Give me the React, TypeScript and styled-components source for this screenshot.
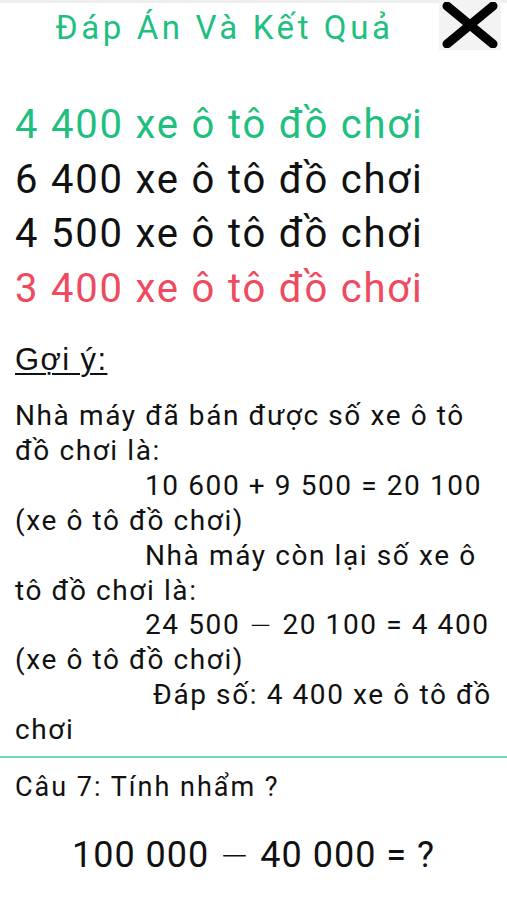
import React from "react";
import styled, { createGlobalStyle } from "styled-components";

const Global = createGlobalStyle`
  html, body { margin: 0; padding: 0; background: #fff; }
  body { font-family: Roboto, "Noto Sans", sans-serif; color: #111; }
`;

const Page = styled.div`
  width: 507px;
  min-height: 900px;
  background: #fff;
  border-top: 3px solid #eeeeee;
  box-sizing: border-box;
  display: flex;
  flex-direction: column;
`;

const Header = styled.div`
  display: flex;
  align-items: flex-start;
  height: 54px;
`;

const Title = styled.div`
  flex: 1;
  text-align: center;
  padding-left: 10px;
  padding-top: 5px;
  font-size: 33px;
  letter-spacing: 3.6px;
  color: #1fc07f;
  line-height: 40px;
  white-space: nowrap;
`;

const CloseBox = styled.div`
  width: 62px;
  height: 50px;
  margin-right: 6px;
  margin-top: -3px;
  background: #f3f3f3;
  display: flex;
  align-items: center;
  justify-content: center;
`;

const Answers = styled.div`
  display: flex;
  flex-direction: column;
  padding: 41px 15px 0;
`;

const Answer = styled.div<{ $tone: "ok" | "bad" | "plain" }>`
  font-size: 40px;
  letter-spacing: 1.8px;
  line-height: 54.5px;
  white-space: nowrap;
  color: ${(p) => (p.$tone === "ok" ? "#1fc07f" : p.$tone === "bad" ? "#ef4a5f" : "#111")};
`;

const HintTitle = styled.div`
  margin: 24px 15px 0;
  font-family: "Liberation Sans", Arial, sans-serif;
  font-size: 31px;
  letter-spacing: 1.4px;
  line-height: 40px;
  text-decoration: underline;
  text-decoration-thickness: 2px;
  text-underline-offset: 3px;
  color: #111;
`;

const Hint = styled.div`
  margin-top: 19px;
  padding: 0 15px;
  display: flex;
  flex-direction: column;
`;

const HintLine = styled.div<{ $indent?: number }>`
  font-size: 28px;
  letter-spacing: 1.6px;
  line-height: 34.9px;
  padding-left: ${(p) => p.$indent ?? 0}px;
  white-space: nowrap;
  color: #111;
`;

const Minus = styled.span`
  font-family: "DejaVu Sans", sans-serif;
  font-weight: 300;
`;

const Divider = styled.div`
  height: 2px;
  background: #6dd8b2;
  margin-top: 8px;
`;

const Question = styled.div`
  padding: 12px 15px 0;
  font-size: 27px;
  letter-spacing: 2px;
  line-height: 34px;
  white-space: nowrap;
  color: #111;
`;

const Expr = styled.div`
  text-align: center;
  margin-top: 29px;
  font-size: 36px;
  letter-spacing: 1px;
  line-height: 44px;
  white-space: nowrap;
  color: #111;
`;

const XIcon = () => (
  <svg width="58" height="46" viewBox="0 0 58 46">
    <path d="M6 4 L52 42 M52 4 L6 42" stroke="#000" strokeWidth="9" strokeLinecap="round" />
  </svg>
);

export default function App() {
  return (
    <>
      <Global />
      <Page>
        <Header>
          <Title>Đáp Án Và Kết Quả</Title>
          <CloseBox>
            <XIcon />
          </CloseBox>
        </Header>
        <Answers>
          <Answer $tone="ok">4 400 xe ô tô đồ chơi</Answer>
          <Answer $tone="plain">6 400 xe ô tô đồ chơi</Answer>
          <Answer $tone="plain">4 500 xe ô tô đồ chơi</Answer>
          <Answer $tone="bad">3 400 xe ô tô đồ chơi</Answer>
        </Answers>
        <HintTitle>Gợi ý:</HintTitle>
        <Hint>
          <HintLine>Nhà máy đã bán được số xe ô tô</HintLine>
          <HintLine>đồ chơi là:</HintLine>
          <HintLine $indent={130}>10 600 + 9 500 = 20 100</HintLine>
          <HintLine>(xe ô tô đồ chơi)</HintLine>
          <HintLine $indent={130}>Nhà máy còn lại số xe ô</HintLine>
          <HintLine>tô đồ chơi là:</HintLine>
          <HintLine $indent={130}>24 500 <Minus>−</Minus> 20 100 = 4 400</HintLine>
          <HintLine>(xe ô tô đồ chơi)</HintLine>
          <HintLine $indent={138}>Đáp số: 4 400 xe ô tô đồ</HintLine>
          <HintLine>chơi</HintLine>
        </Hint>
        <Divider />
        <Question>Câu 7: Tính nhẩm ?</Question>
        <Expr>100 000 <Minus>−</Minus> 40 000 = ?</Expr>
      </Page>
    </>
  );
}
